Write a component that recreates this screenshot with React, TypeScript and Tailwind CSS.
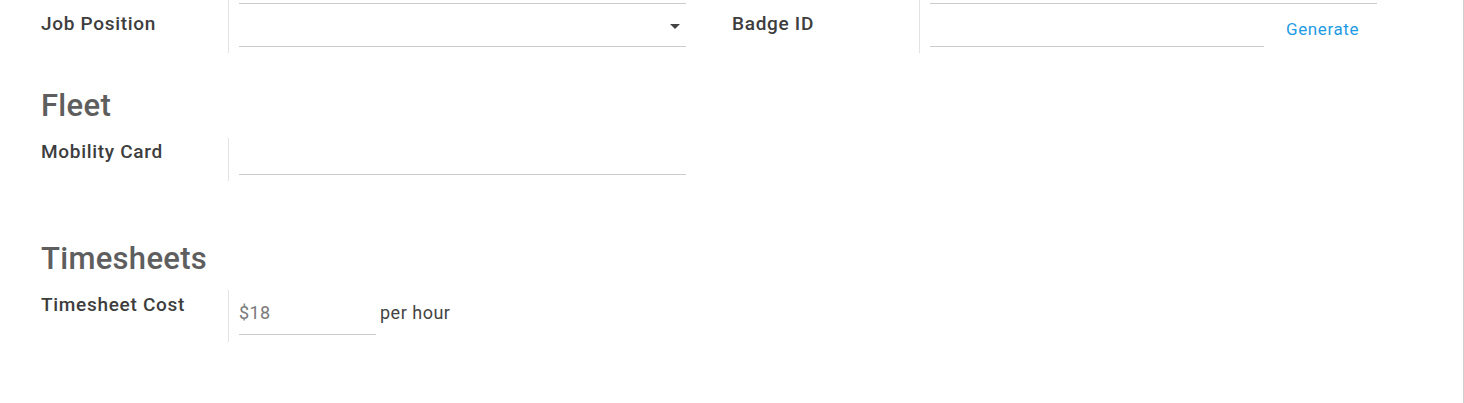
import React from 'react';

const font = { fontFamily: 'Roboto, "Liberation Sans", sans-serif' };

const Label: React.FC<{ text: string; pt: string }> = ({ text, pt }) => (
  <div className={`w-[187px] shrink-0 ${pt} text-[19px] leading-6 tracking-[0.7px] font-medium text-[#3d3d3d]`}>{text}</div>
);

const App: React.FC = () => {
  return (
    <div className="w-full h-[403px] bg-white border-r border-[#cfcfcf] text-[#3d3d3d]" style={font}>
      <div className="pl-[41px]">
        {/* first row: job position + badge id */}
        <div className="flex gap-[46px]">
          <div className="flex w-[645px] h-[53px]">
            <Label text="Job Position" pt="pt-[12px]" />
            <div className="flex-1 border-l border-[#e3e3e3] pl-[10px]">
              <div className="mt-[3px] h-px bg-[#cccccc]" />
              <div className="h-[43px] border-b border-[#cccccc] flex items-center justify-end pr-[6px]">
                <span className="w-0 h-0 border-l-[5px] border-r-[5px] border-t-[5px] border-l-transparent border-r-transparent border-t-[#444] mt-[3px]" />
              </div>
            </div>
          </div>
          <div className="flex w-[645px] h-[53px]">
            <Label text="Badge ID" pt="pt-[12px]" />
            <div className="flex-1 border-l border-[#e3e3e3] pl-[10px]">
              <div className="mt-[3px] h-px bg-[#cccccc]" />
              <div className="flex items-end">
                <div className="w-[334px] h-[43px] border-b border-[#cccccc]" />
                <div className="ml-[22px] mb-[6px] text-[17px] leading-6 tracking-[0.6px] text-[#1e9be4]">Generate</div>
              </div>
            </div>
          </div>
        </div>

        <h2 className="mt-[35px] text-[31px] leading-9 tracking-[0.3px] font-medium text-[#5e5e5e]">Fleet</h2>

        <div className="mt-[14px] flex w-[645px] h-[43px]">
          <Label text="Mobility Card" pt="pt-[2px]" />
          <div className="flex-1 border-l border-[#e3e3e3] pl-[10px]">
            <div className="h-[37px] border-b border-[#cccccc]" />
          </div>
        </div>

        <h2 className="mt-[60px] text-[31px] leading-9 tracking-[0.3px] font-medium text-[#5e5e5e]">Timesheets</h2>

        <div className="mt-[13px] flex w-[645px] h-[52px]">
          <Label text="Timesheet Cost" pt="pt-[3px]" />
          <div className="flex-1 border-l border-[#e3e3e3] pl-[10px] flex items-start">
            <div className="w-[137px] h-[45px] border-b border-[#cccccc] flex items-center text-[18px] tracking-[0.4px] text-[#7a7a7a]">$18</div>
            <div className="ml-[4px] h-[45px] flex items-center text-[18px] tracking-[0.5px] text-[#444]">per hour</div>
          </div>
        </div>
      </div>
    </div>
  );
};

export default App;
